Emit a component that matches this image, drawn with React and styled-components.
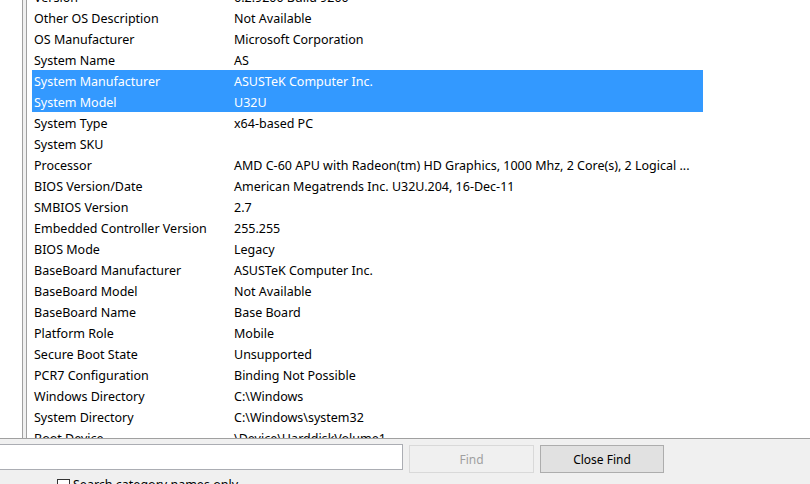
import React from 'react';
import styled, { createGlobalStyle } from 'styled-components';

const GlobalStyle = createGlobalStyle`
  html, body {
    margin: 0;
    padding: 0;
    overflow: hidden;
    background: #f0f0f0;
  }
  body {
    font-family: "Noto Sans", "Open Sans", "Liberation Sans", sans-serif;
    font-size: 12.5px;
    color: #000;
  }
`

const WindowStyled = styled.div`
  width: 810px;
  height: 484px;
  display: flex;
  flex-direction: column;
  overflow: hidden;
`
const PanesStyled = styled.div`
  height: 438px;
  display: flex;
  border-bottom: 1px solid #a0a0a0;
  flex-shrink: 0;
`
const TreePane = styled.div`
  width: 22px;
  background: #fff;
  border-right: 1px solid #a0a0a0;
`
const Splitter = styled.div`
  width: 3px;
  background: #f0f0f0;
`
const ListPane = styled.div`
  flex: 1;
  background: #fff;
  border-left: 1px solid #a0a0a0;
  padding-left: 5px;
  overflow: hidden;
`
const ListBody = styled.div`
  margin-top: -14px; /* scrolled a bit past the first row */
  width: 671px;
`
const RowStyled = styled.div`
  display: grid;
  grid-template-columns: 200px 471px;
  height: 21px;
  background: ${props => props.selected ? '#3399ff' : 'transparent'};
  color: ${props => props.selected ? '#fff' : '#000'};
`
const Cell = styled.div`
  padding: 2px 0 0 2px;
  line-height: 19px;
  white-space: nowrap;
  overflow: hidden;
`
const BottomBar = styled.div`
  flex: 1;
  display: flex;
  flex-direction: column;
  gap: 5px;
  padding-top: 5px;
  background: #f0f0f0;
`
const FindRow = styled.div`
  display: flex;
  align-items: flex-start;
`
const SearchInput = styled.input`
  box-sizing: border-box;
  width: 404px;
  height: 26px;
  margin: 0 0 0 -1px;
  border: 1px solid #abadb3;
  background: #fff;
  outline: none;
  font: inherit;
`
const Button = styled.button`
  box-sizing: border-box;
  width: ${props => props.width}px;
  height: 28px;
  margin: 1px 0 0 6px;
  padding: 0;
  font: inherit;
  font-size: 12px;
  border: 1px solid ${props => props.disabled ? '#d9d9d9' : '#adadad'};
  background: ${props => props.disabled ? '#f0f0f0' : '#e1e1e1'};
  color: ${props => props.disabled ? '#a0a0a0' : '#000'};
`
const CheckRow = styled.label`
  display: flex;
  align-items: center;
  gap: 3px;
  padding-left: 57px;
  height: 14px;
  line-height: 14px;
`
const CheckBox = styled.span`
  box-sizing: border-box;
  width: 13px;
  height: 13px;
  border: 1px solid #333;
  background: #fff;
  flex-shrink: 0;
`

const rows = [
  ['Version', '6.2.9200 Build 9200'],
  ['Other OS Description', 'Not Available'],
  ['OS Manufacturer', 'Microsoft Corporation'],
  ['System Name', 'AS'],
  ['System Manufacturer', 'ASUSTeK Computer Inc.', true],
  ['System Model', 'U32U', true],
  ['System Type', 'x64-based PC'],
  ['System SKU', ''],
  ['Processor', 'AMD C-60 APU with Radeon(tm) HD Graphics, 1000 Mhz, 2 Core(s), 2 Logical ...'],
  ['BIOS Version/Date', 'American Megatrends Inc. U32U.204, 16-Dec-11'],
  ['SMBIOS Version', '2.7'],
  ['Embedded Controller Version', '255.255'],
  ['BIOS Mode', 'Legacy'],
  ['BaseBoard Manufacturer', 'ASUSTeK Computer Inc.'],
  ['BaseBoard Model', 'Not Available'],
  ['BaseBoard Name', 'Base Board'],
  ['Platform Role', 'Mobile'],
  ['Secure Boot State', 'Unsupported'],
  ['PCR7 Configuration', 'Binding Not Possible'],
  ['Windows Directory', 'C:\\Windows'],
  ['System Directory', 'C:\\Windows\\system32'],
  ['Boot Device', '\\Device\\HarddiskVolume1'],
];

const App = () => {
  return (
    <WindowStyled>
      <GlobalStyle />
      <PanesStyled>
        <TreePane />
        <Splitter />
        <ListPane>
          <ListBody>
            {rows.map(([item, value, selected]) => (
              <RowStyled key={item} selected={selected}>
                <Cell>{item}</Cell>
                <Cell>{value}</Cell>
              </RowStyled>
            ))}
          </ListBody>
        </ListPane>
      </PanesStyled>
      <BottomBar>
        <FindRow>
          <SearchInput type="text" />
          <Button width={125} disabled>Find</Button>
          <Button width={124}>Close Find</Button>
        </FindRow>
        <CheckRow>
          <CheckBox />
          Search category names only
        </CheckRow>
      </BottomBar>
    </WindowStyled>
  );
}

export default App;
